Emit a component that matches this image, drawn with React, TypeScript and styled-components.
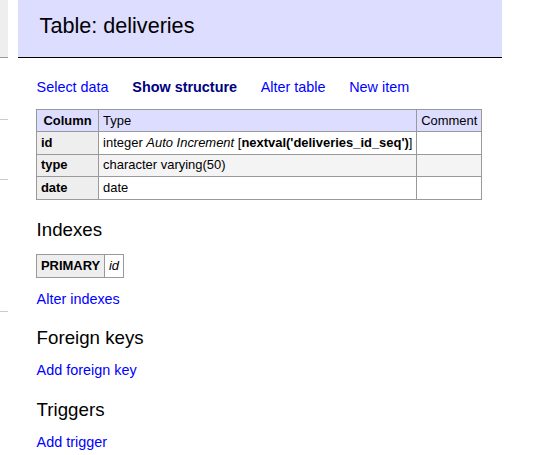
import React from "react";
import styled, { createGlobalStyle } from "styled-components";

const Global = createGlobalStyle`
  html, body { margin: 0; padding: 0; background: #fff; }
  body {
    font-family: "Liberation Sans", Arial, Helvetica, sans-serif;
    font-size: 14.4px;
    line-height: 18px;
    color: #000;
  }
`;

const Page = styled.div`
  display: flex;
  align-items: flex-start;
  gap: 10px;
`;

const Sidebar = styled.aside`
  width: 8px;
  display: flex;
  flex-direction: column;
`;

const SideHead = styled.div`
  height: 57px;
  background: #eee;
  border-bottom: 1px solid #999;
`;

const SideRule = styled.div<{ $gap: number }>`
  margin-top: ${(p) => p.$gap}px;
  height: 1px;
  background: #ccc;
`;

const Main = styled.main`
  width: 484px;
  display: flex;
  flex-direction: column;
`;

const Header = styled.h2`
  margin: 0;
  padding: 12px 21.6px 18px;
  font-size: 21.6px;
  line-height: 27px;
  font-weight: normal;
  background: #ddf;
  border-bottom: 1px solid #000;
`;

const Content = styled.div`
  padding-left: 18px;
  display: flex;
  flex-direction: column;
  align-items: flex-start;
`;

const Nav = styled.nav`
  margin-top: 20px;
  padding-left: 0.6px;
  display: flex;
  gap: 23.7px;
`;

const Link = styled.a<{ $active?: boolean }>`
  color: ${(p) => (p.$active ? "#000080" : "#00f")};
  font-weight: ${(p) => (p.$active ? "bold" : "normal")};
  text-decoration: none;
  cursor: pointer;
`;

const Table = styled.table<{ $mt: number }>`
  margin-top: ${(p) => p.$mt}px;
  border-collapse: collapse;
  font-size: 12.96px;
  line-height: 16.2px;
`;

const HeadRow = styled.tr`
  background: #ddf;
`;

const Row = styled.tr<{ $even?: boolean }>`
  background: ${(p) => (p.$even ? "#f4f4f4" : "#fff")};
`;

const HeadCell = styled.th`
  border: 1px solid #999;
  padding: 2.6px 6.5px;
  text-align: center;
  font-weight: bold;
`;

const RowHead = styled.th`
  border: 1px solid #999;
  padding: 2.6px 3.9px;
  text-align: left;
  font-weight: bold;
  background: #eee;
`;

const Cell = styled.td`
  border: 1px solid #999;
  padding: 2.6px 3.9px;
  text-align: left;
  white-space: nowrap;
`;

const Heading = styled.h3<{ $mt: number }>`
  margin: ${(p) => p.$mt}px 0 0;
  padding-left: 0.6px;
  font-size: 18.72px;
  line-height: 23.4px;
  font-weight: normal;
`;

const LinkLine = styled.p<{ $mt: number }>`
  margin: ${(p) => p.$mt}px 0 0;
  padding-left: 0.6px;
`;

export default function App() {
  return (
    <>
      <Global />
      <Page>
        <Sidebar>
          <SideHead />
          <SideRule $gap={61} />
          <SideRule $gap={59} />
          <SideRule $gap={131} />
        </Sidebar>
        <Main>
          <Header>Table: deliveries</Header>
          <Content>
            <Nav>
              <Link>Select data</Link>
              <Link $active>Show structure</Link>
              <Link>Alter table</Link>
              <Link>New item</Link>
            </Nav>
            <Table $mt={13}>
              <thead>
                <HeadRow>
                  <HeadCell>Column</HeadCell>
                  <Cell>Type</Cell>
                  <Cell>Comment</Cell>
                </HeadRow>
              </thead>
              <tbody>
                <Row>
                  <RowHead>id</RowHead>
                  <Cell>
                    integer <i>Auto Increment</i> [<b>nextval('deliveries_id_seq')</b>]
                  </Cell>
                  <Cell />
                </Row>
                <Row $even>
                  <RowHead>type</RowHead>
                  <Cell>character varying(50)</Cell>
                  <Cell />
                </Row>
                <Row>
                  <RowHead>date</RowHead>
                  <Cell>date</Cell>
                  <Cell />
                </Row>
              </tbody>
            </Table>
            <Heading $mt={18.7}>Indexes</Heading>
            <Table $mt={12.8}>
              <tbody>
                <Row>
                  <RowHead>PRIMARY</RowHead>
                  <Cell>
                    <i>id</i>
                  </Cell>
                </Row>
              </tbody>
            </Table>
            <LinkLine $mt={11.7}>
              <Link>Alter indexes</Link>
            </LinkLine>
            <Heading $mt={18.5}>Foreign keys</Heading>
            <LinkLine $mt={11.5}>
              <Link>Add foreign key</Link>
            </LinkLine>
            <Heading $mt={19.3}>Triggers</Heading>
            <LinkLine $mt={11.6}>
              <Link>Add trigger</Link>
            </LinkLine>
          </Content>
        </Main>
      </Page>
    </>
  );
}
